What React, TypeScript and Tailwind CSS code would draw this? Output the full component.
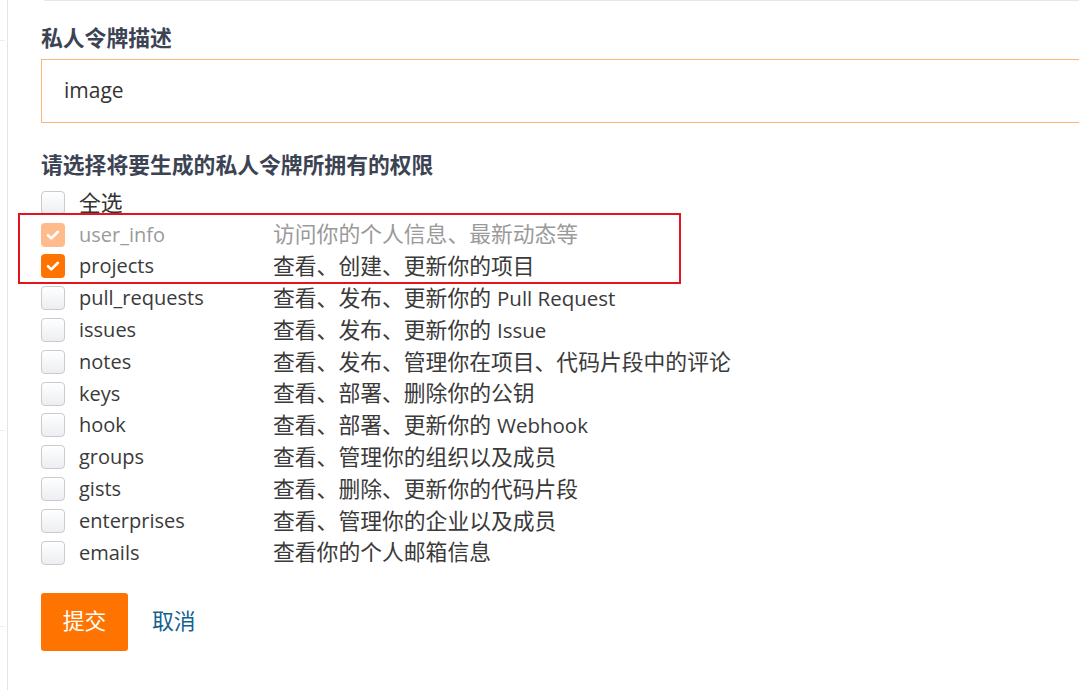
import React from 'react';

interface Scope {
    name: string;
    desc: string;
    en?: string;
    checked?: boolean;
    disabled?: boolean;
}

const scopes: Scope[] = [
    { name: 'user_info', desc: '访问你的个人信息、最新动态等', checked: true, disabled: true },
    { name: 'projects', desc: '查看、创建、更新你的项目', checked: true },
    { name: 'pull_requests', desc: '查看、发布、更新你的', en: 'Pull Request' },
    { name: 'issues', desc: '查看、发布、更新你的', en: 'Issue' },
    { name: 'notes', desc: '查看、发布、管理你在项目、代码片段中的评论' },
    { name: 'keys', desc: '查看、部署、删除你的公钥' },
    { name: 'hook', desc: '查看、部署、更新你的', en: 'Webhook' },
    { name: 'groups', desc: '查看、管理你的组织以及成员' },
    { name: 'gists', desc: '查看、删除、更新你的代码片段' },
    { name: 'enterprises', desc: '查看、管理你的企业以及成员' },
    { name: 'emails', desc: '查看你的个人邮箱信息' },
];

const Box: React.FC<{ checked?: boolean; disabled?: boolean }> = ({ checked, disabled }) => {
    if (checked) {
        return (
            <span
                className={
                    'flex h-6 w-6 shrink-0 items-center justify-center rounded-[4px] ' +
                    (disabled ? 'bg-[#ffbb8c]' : 'bg-[#ff7300]')
                }
            >
                <svg width="16" height="16" viewBox="0 0 16 16" fill="none">
                    <path d="M3 8.2l3.3 3.2L13 4.8" stroke="#fff" strokeWidth="2.6" strokeLinecap="round" strokeLinejoin="round" />
                </svg>
            </span>
        );
    }
    return (
        <span className="h-6 w-6 shrink-0 rounded-[4px] border border-[#c9cbcf] bg-gradient-to-b from-white to-[#eceef1]" />
    );
};

export default function App() {
    return (
        <div className="flex min-h-[690px] w-[1079px] overflow-hidden bg-white font-['Open_Sans','Noto_Sans_CJK_SC',sans-serif] text-[#333]">
            {/* left gutter */}
            <div className="flex w-[7px] shrink-0 flex-col">
                <div className="mt-[40px] h-px w-[5px] bg-[#eeeeee]" />
                <div className="mt-[389px] h-px w-[5px] bg-[#eeeeee]" />
                <div className="mt-[195px] h-px w-[5px] bg-[#eeeeee]" />
            </div>
            <div className="relative flex-1 border-l border-[#e5e5e5]">
                <div className="ml-[36px] h-px bg-[#e3e8ee]" />
                <div className="pl-[33px]">
                    <div className="pt-[24px] text-[21.8px] font-bold leading-[26px] text-[#3c4353]">私人令牌描述</div>
                    <div className="mt-[8px] flex h-[64px] w-[1100px] items-center border border-[#fbb57a] pl-[22px] text-[21px] text-[#333]">
                        image
                    </div>
                    <div className="mt-[29px] text-[21.8px] font-bold leading-[26px] text-[#3c4353]">
                        请选择将要生成的私人令牌所拥有的权限
                    </div>
                    <div className="mt-[9px] flex flex-col">
                        <div className="flex h-[31.8px] items-center">
                            <Box />
                            <span className="ml-[14px] text-[21.8px]">全选</span>
                        </div>
                        {scopes.map(s => (
                            <div key={s.name} className="flex h-[31.8px] items-center">
                                <Box checked={s.checked} disabled={s.disabled} />
                                <span className={'ml-[14px] w-[194px] text-[20px] ' + (s.disabled ? 'text-[#9a9a9a]' : 'text-[#3a3a3a]')}>
                                    {s.name}
                                </span>
                                <span className={'text-[21.8px] ' + (s.disabled ? 'text-[#9a9a9a]' : 'text-[#3a3a3a]')}>
                                    {s.desc}
                                    {s.en && <span className="ml-[6px] text-[20.5px]">{s.en}</span>}
                                </span>
                            </div>
                        ))}
                    </div>
                    <div className="mt-[24px] flex items-center">
                        <button className="h-[58px] w-[87px] rounded-[3px] bg-[#ff7300] text-[21.8px] text-white">提交</button>
                        <button className="ml-[24px] text-[21.8px] text-[#13628f]">取消</button>
                    </div>
                </div>
                {/* annotation frame */}
                <div className="absolute left-[10px] top-[213px] h-[71px] w-[663px] border-2 border-[#e4141e]" />
            </div>
        </div>
    );
}
